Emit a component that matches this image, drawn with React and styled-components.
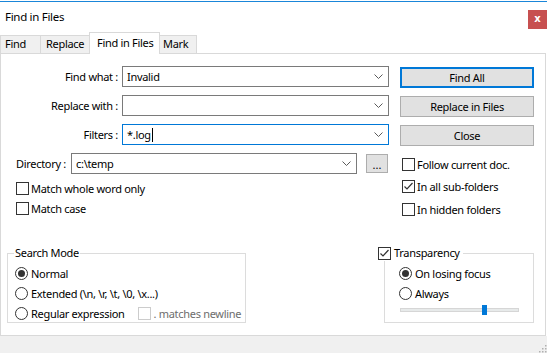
import React from "react";
import styled, { createGlobalStyle } from "styled-components";

const Global = createGlobalStyle`
  html, body { margin: 0; padding: 0; background: #fff; }
  body {
    font-family: "Noto Sans", "Liberation Sans", sans-serif;
    font-size: 11px;
    letter-spacing: -0.3px;
    color: #000;
  }
  * { box-sizing: border-box; }
`;

const Window = styled.div`
  width: 547px;
  height: 353px;
  padding-top: 1px;
  display: flex;
  flex-direction: column;
  background: #fff;
  overflow: hidden;
`;

const TitleBar = styled.div`
  height: 31px;
  border-top: 1px solid #1a86d9;
  display: flex;
  justify-content: space-between;
  align-items: flex-start;
  padding-left: 5px;
`;

const Title = styled.div`
  margin-top: 7px;
  line-height: 16px;
  font-size: 11.5px;
`;

const CloseBtn = styled.div`
  margin-top: 8px;
  width: 19px;
  height: 19px;
  background: #c75050;
  color: #fff;
  font-family: "DejaVu Sans", sans-serif;
  font-weight: bold;
  font-size: 10px;
  letter-spacing: 0;
  line-height: 18px;
  text-align: center;
`;

const TabRow = styled.div`
  height: 21px;
  display: flex;
  align-items: flex-end;
`;

const Tab = styled.div`
  position: relative;
  width: ${(p) => p.$w}px;
  height: ${(p) => (p.$active ? 22 : 18)}px;
  margin-left: ${(p) => (p.$first ? 0 : p.$active ? -3 : -1)}px;
  margin-right: ${(p) => (p.$active ? -2 : 0)}px;
  margin-bottom: ${(p) => (p.$active ? -1 : 0)}px;
  z-index: ${(p) => (p.$active ? 2 : 1)};
  border: 1px solid #d9d9d9;
  border-bottom: none;
  background: ${(p) => (p.$active ? "#fff" : "#f0f0f0")};
  padding-left: ${(p) => p.$pad}px;
  line-height: ${(p) => (p.$active ? 19 : 16)}px;
  white-space: nowrap;
  overflow: hidden;
`;

const Panel = styled.div`
  width: 546px;
  height: 283px;
  border: 1px solid #d9d9d9;
  background: #fff;
  display: flex;
  flex-direction: column;
`;

const TopSection = styled.div`
  display: flex;
  padding-top: 12px;
  gap: 11px;
`;

const LeftCol = styled.div`
  display: flex;
  flex-direction: column;
`;

const FieldGrid = styled.div`
  display: grid;
  grid-template-columns: 117px 267px;
  grid-auto-rows: 21px;
  column-gap: 4px;
  row-gap: 8px;
`;

const FieldLabel = styled.div`
  text-align: right;
  align-self: center;
  line-height: 16px;
  white-space: nowrap;
`;

const Combo = styled.div`
  height: 21px;
  width: ${(p) => (p.$w ? `${p.$w}px` : "auto")};
  border: 1px solid ${(p) => (p.$focus ? "#0078d7" : "#7a7a7a")};
  background: #fff;
  display: flex;
  align-items: center;
  padding-left: 4px;
  padding-right: 5px;
`;

const ComboText = styled.div`
  flex: 1;
  line-height: 16px;
  white-space: nowrap;
  display: flex;
  align-items: center;
`;

const Caret = styled.span`
  display: inline-block;
  width: 1px;
  height: 14px;
  background: #000;
  margin-left: 1px;
`;

const DirRow = styled.div`
  grid-column: 1 / -1;
  display: flex;
  align-items: center;
  padding-left: 15px;
`;

const DirLabel = styled.div`
  width: 51px;
  margin-right: 4px;
  white-space: nowrap;
  line-height: 16px;
`;

const DotsBtn = styled.div`
  margin-left: 9px;
  width: 22px;
  height: 19px;
  background: #e1e1e1;
  border: 1px solid #adadad;
  text-align: center;
  line-height: 19px;
  font-size: 11px;
  letter-spacing: 0;
`;

const CheckList = styled.div`
  display: flex;
  flex-direction: column;
  gap: ${(p) => p.$gap}px;
  margin-top: ${(p) => p.$mt}px;
  padding-left: ${(p) => p.$pl}px;
`;

const CheckRow = styled.div`
  display: flex;
  align-items: center;
  height: 16px;
  gap: 2px;
  white-space: nowrap;
  color: ${(p) => (p.$disabled ? "#6d6d6d" : "#000")};
  margin-top: ${(p) => p.$mt || 0}px;
`;

const Box = styled.div`
  width: 13px;
  height: 13px;
  border: 1px solid ${(p) => (p.$disabled ? "#cccccc" : "#333333")};
  background: #fff;
  display: flex;
  align-items: center;
  justify-content: center;
  flex-shrink: 0;
`;

const RightCol = styled.div`
  width: 134px;
  display: flex;
  flex-direction: column;
`;

const ButtonStack = styled.div`
  display: flex;
  flex-direction: column;
  gap: 8px;
  margin-top: 1px;
`;

const Button = styled.div`
  height: 21px;
  background: #e1e1e1;
  border: ${(p) => (p.$default ? "2px solid #0078d7" : "1px solid #adadad")};
  display: flex;
  align-items: center;
  justify-content: center;
  line-height: 16px;
`;

const Spacer = styled.div`
  flex: 1;
`;

const BottomSection = styled.div`
  display: flex;
  justify-content: space-between;
  padding: 0 11px 12px 6px;
`;

const GroupBox = styled.div`
  position: relative;
  width: ${(p) => p.$w}px;
  height: 70px;
  border: 1px solid #dcdcdc;
  padding: 11px 0 0 ${(p) => p.$pl}px;
  display: flex;
  flex-direction: column;
  gap: 4px;
`;

const GroupTitle = styled.div`
  position: absolute;
  top: -9px;
  left: ${(p) => p.$left}px;
  background: #fff;
  padding: 0 ${(p) => p.$padR}px 0 ${(p) => p.$padL}px;
  line-height: 16px;
  display: flex;
  align-items: center;
  gap: 3px;
  white-space: nowrap;
`;

const RadioRow = styled.div`
  display: flex;
  align-items: center;
  height: 16px;
  gap: 3px;
  white-space: nowrap;
`;

const Circle = styled.div`
  width: 13px;
  height: 13px;
  border-radius: 50%;
  border: 1px solid #333;
  background: #fff;
  display: flex;
  align-items: center;
  justify-content: center;
  flex-shrink: 0;
`;

const Dot = styled.div`
  width: 7px;
  height: 7px;
  border-radius: 50%;
  background: #333;
`;

const SubCheck = styled.div`
  margin-left: 10px;
  display: flex;
  align-items: center;
  gap: 3px;
  color: #6d6d6d;
`;

const SliderWrap = styled.div`
  position: relative;
  width: 119px;
  height: 10px;
  margin-left: 1px;
  display: flex;
  align-items: center;
`;

const Track = styled.div`
  width: 100%;
  height: 4px;
  background: #e7eaea;
  border: 1px solid #d6d6d6;
`;

const Thumb = styled.div`
  position: absolute;
  top: 0;
  width: 5px;
  height: 10px;
  background: #0078d7;
`;

const Footer = styled.div`
  flex: 1;
  background: #f0f0f0;
  display: flex;
  justify-content: flex-end;
  align-items: flex-end;
`;

const Chevron = () => (
  <svg width="9" height="5" viewBox="0 0 9 5">
    <path d="M0.5 0.5 L4.5 4.5 L8.5 0.5" fill="none" stroke="#5a5a5a" strokeWidth="1" />
  </svg>
);

const Check = () => (
  <svg width="11" height="11" viewBox="0 0 11 11">
    <path d="M1.5 5.5 L4 8 L9.5 2" fill="none" stroke="#333" strokeWidth="1.2" />
  </svg>
);

const CheckBox = ({ checked, disabled, label, mt }) => (
  <CheckRow $disabled={disabled} $mt={mt}>
    <Box $disabled={disabled}>{checked && <Check />}</Box>
    {label}
  </CheckRow>
);

const Radio = ({ checked, label, children }) => (
  <RadioRow>
    <Circle>{checked && <Dot />}</Circle>
    {label}
    {children}
  </RadioRow>
);

const Grip = () => (
  <svg width="10" height="10" viewBox="0 0 10 10">
    {[
      [8, 2],
      [5, 5],
      [8, 5],
      [2, 8],
      [5, 8],
      [8, 8],
    ].map(([x, y], i) => (
      <rect key={i} x={x} y={y} width="1.5" height="1.5" fill="#b0b0b0" />
    ))}
  </svg>
);

const tabs = [
  { label: "Find", w: 41, pad: 4 },
  { label: "Replace", w: 52, pad: 5 },
  { label: "Find in Files", w: 71, pad: 7, active: true },
  { label: "Mark", w: 40, pad: 5 },
];

const sliderValue = 0.69;

export default function App() {
  return (
    <>
      <Global />
      <Window>
        <TitleBar>
          <Title>Find in Files</Title>
          <CloseBtn>x</CloseBtn>
        </TitleBar>
        <TabRow>
          {tabs.map((t, i) => (
            <Tab key={t.label} $w={t.w} $pad={t.pad} $active={t.active} $first={i === 0}>
              {t.label}
            </Tab>
          ))}
        </TabRow>
        <Panel>
          <TopSection>
            <LeftCol>
              <FieldGrid>
                <FieldLabel>Find what :</FieldLabel>
                <Combo>
                  <ComboText>Invalid</ComboText>
                  <Chevron />
                </Combo>
                <FieldLabel>Replace with :</FieldLabel>
                <Combo>
                  <ComboText />
                  <Chevron />
                </Combo>
                <FieldLabel>Filters :</FieldLabel>
                <Combo $focus>
                  <ComboText>
                    *.log
                    <Caret />
                  </ComboText>
                  <Chevron />
                </Combo>
                <DirRow>
                  <DirLabel>Directory :</DirLabel>
                  <Combo $w={286}>
                    <ComboText>c:\temp</ComboText>
                    <Chevron />
                  </Combo>
                  <DotsBtn>...</DotsBtn>
                </DirRow>
              </FieldGrid>
              <CheckList $gap={4} $mt={6} $pl={15}>
                <CheckBox label="Match whole word only" />
                <CheckBox label="Match case" />
              </CheckList>
            </LeftCol>
            <RightCol>
              <ButtonStack>
                <Button $default>Find All</Button>
                <Button>Replace in Files</Button>
                <Button>Close</Button>
              </ButtonStack>
              <CheckList $gap={6} $mt={10} $pl={2}>
                <CheckBox label="Follow current doc." />
                <CheckBox checked label="In all sub-folders" />
                <CheckBox label="In hidden folders" mt={1} />
              </CheckList>
            </RightCol>
          </TopSection>
          <Spacer />
          <BottomSection>
            <GroupBox $w={239} $pl={7}>
              <GroupTitle $left={6} $padL={1} $padR={1}>
                Search Mode
              </GroupTitle>
              <Radio checked label="Normal" />
              <Radio label="Extended (\n, \r, \t, \0, \x...)" />
              <Radio label="Regular expression">
                <SubCheck>
                  <Box $disabled />. matches newline
                </SubCheck>
              </Radio>
            </GroupBox>
            <GroupBox $w={150} $pl={14}>
              <GroupTitle $left={-7} $padL={0} $padR={3}>
                <Box>
                  <Check />
                </Box>
                Transparency
              </GroupTitle>
              <Radio checked label="On losing focus" />
              <Radio label="Always" />
              <SliderWrap>
                <Track />
                <Thumb style={{ left: `${Math.round(sliderValue * 119)}px` }} />
              </SliderWrap>
            </GroupBox>
          </BottomSection>
        </Panel>
        <Footer>
          <Grip />
        </Footer>
      </Window>
    </>
  );
}
